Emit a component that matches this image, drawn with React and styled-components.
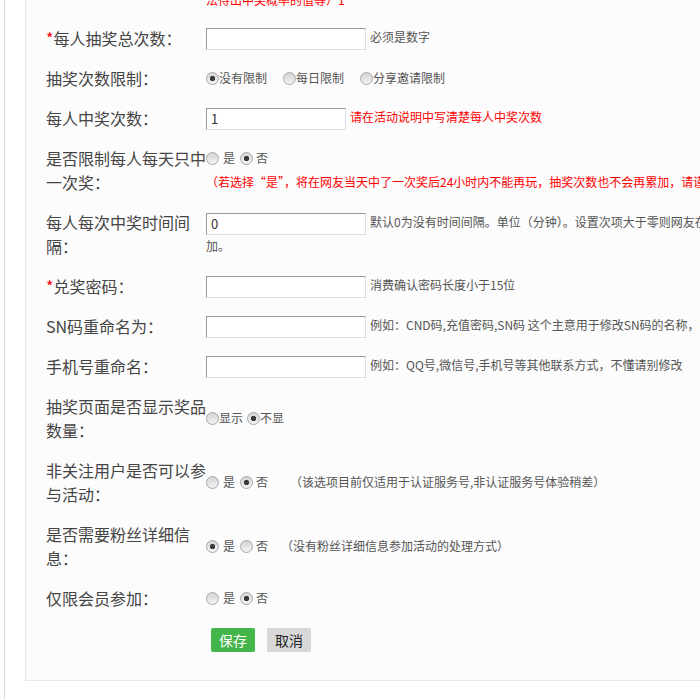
import React from 'react';
import styled, { createGlobalStyle } from 'styled-components';

const GlobalStyle = createGlobalStyle`
  html, body {
    margin: 0;
    overflow: hidden;
    background: #fff;
  }
  body {
    font-family: "Noto Sans CJK SC", "Noto Sans", sans-serif;
    color: #444;
  }
`;

const Page = styled.div`
  margin-left: 4px;
  border-left: 1px solid #d3dbe7;
  min-height: 100vh;
  box-sizing: border-box;
  padding: 0 0 18px 20px;
`;

const Panel = styled.div`
  width: 1000px;
  margin-top: -11px;
  padding: 0 0 28px 20px;
  background: #fcfcfc;
  border: 1px solid #e8e8e8;
`;

const Form = styled.form`
  display: grid;
  grid-template-columns: 160px 600px;
  row-gap: 16px;
  align-items: center;
`;

const Label = styled.div`
  font-size: 16px;
  line-height: 24px;
  color: #444;
`;

const Star = styled.span`
  color: #f00;
`;

const Field = styled.div`
  font-size: 12px;
  line-height: 22px;
  color: #555;
`;

const TopNote = styled.div`
  grid-column: 2;
  font-size: 12px;
  line-height: 20px;
  color: #f00;
  white-space: nowrap;
`;

const TextInput = styled.input`
  box-sizing: border-box;
  width: ${(p) => p.$width || 160}px;
  height: 22px;
  margin: 0;
  padding: 0 4px;
  border: 1px solid;
  border-color: #999 #ddd #ddd #999;
  background: #fff;
  font-family: inherit;
  font-size: 13px;
  color: #333;
  vertical-align: middle;
  outline: none;
`;

const Hint = styled.span`
  margin-left: ${(p) => (p.$gap != null ? p.$gap : 4)}px;
  color: ${(p) => (p.$red ? '#f00' : '#555')};
  white-space: ${(p) => (p.$wrap ? 'normal' : 'nowrap')};
`;

const BlockHint = styled.div`
  color: #f00;
  white-space: nowrap;
  line-height: 24px;
`;

const RadioLine = styled.div`
  display: flex;
  align-items: center;
  height: 24px;
  white-space: nowrap;
`;

const Option = styled.label`
  display: inline-flex;
  align-items: center;
  gap: ${(p) => p.$gap || 0}px;
  margin-right: ${(p) => p.$after || 0}px;
`;

const Radio = styled.input.attrs({ type: 'radio' })`
  appearance: none;
  box-sizing: border-box;
  width: 13px;
  height: 13px;
  margin: 0;
  border: 1px solid #a8a8a8;
  border-radius: 50%;
  background: linear-gradient(#d4d4d4, #f4f4f4);

  &:checked {
    background:
      radial-gradient(circle, #3c3c3c 0 2.4px, transparent 3px),
      linear-gradient(#d4d4d4, #f4f4f4);
  }
`;

const ButtonBar = styled.div`
  grid-column: 2;
  display: flex;
  gap: 12px;
  padding-left: 5px;
  margin-top: 2px;
`;

const Button = styled.button`
  height: 24px;
  padding: 0 8px;
  border: none;
  border-radius: 2px;
  font-family: inherit;
  font-size: 14px;
  line-height: 24px;
  cursor: pointer;
  background: ${(p) => (p.$primary ? '#44b549' : '#d8d8d8')};
  color: ${(p) => (p.$primary ? '#fff' : '#222')};
`;

const YesNo = ({ name, yes, hint, hintGap }) => (
  <RadioLine>
    <Option $gap={4} $after={5}>
      <Radio name={name} defaultChecked={yes} />是
    </Option>
    <Option $gap={3}>
      <Radio name={name} defaultChecked={!yes} />否
    </Option>
    {hint && <Hint $gap={hintGap}>{hint}</Hint>}
  </RadioLine>
);

export default function App() {
  return (
    <>
      <GlobalStyle />
      <Page>
        <Panel>
          <Form onSubmit={(e) => e.preventDefault()}>
            <TopNote>法得出中奖概率的值等）1</TopNote>

            <Label><Star>*</Star>每人抽奖总次数：</Label>
            <Field>
              <TextInput />
              <Hint>必须是数字</Hint>
            </Field>

            <Label>抽奖次数限制：</Label>
            <Field>
              <RadioLine>
                <Option $after={16}><Radio name="limit" defaultChecked />没有限制</Option>
                <Option $after={16}><Radio name="limit" />每日限制</Option>
                <Option><Radio name="limit" />分享邀请限制</Option>
              </RadioLine>
            </Field>

            <Label>每人中奖次数：</Label>
            <Field>
              <TextInput $width={140} defaultValue="1" />
              <Hint $red>请在活动说明中写清楚每人中奖次数</Hint>
            </Field>

            <Label>是否限制每人每天只中一次奖：</Label>
            <Field>
              <YesNo name="daily" yes={false} />
              <BlockHint>（若选择“是”，将在网友当天中了一次奖后24小时内不能再玩，抽奖次数也不会再累加，请谨慎选择）</BlockHint>
            </Field>

            <Label>每人每次中奖时间间隔：</Label>
            <Field>
              <TextInput defaultValue="0" />
              <Hint $wrap>默认0为没有时间间隔。单位（分钟）。设置次项大于零则网友在该时间内不会累加。</Hint>
            </Field>

            <Label><Star>*</Star>兑奖密码：</Label>
            <Field>
              <TextInput />
              <Hint>消费确认密码长度小于15位</Hint>
            </Field>

            <Label>SN码重命名为：</Label>
            <Field>
              <TextInput />
              <Hint>例如：CND码,充值密码,SN码 这个主意用于修改SN码的名称，不懂请别修改</Hint>
            </Field>

            <Label>手机号重命名：</Label>
            <Field>
              <TextInput />
              <Hint>例如：QQ号,微信号,手机号等其他联系方式，不懂请别修改</Hint>
            </Field>

            <Label>抽奖页面是否显示奖品数量：</Label>
            <Field>
              <RadioLine>
                <Option $after={4}><Radio name="show" />显示</Option>
                <Option><Radio name="show" defaultChecked />不显</Option>
              </RadioLine>
            </Field>

            <Label>非关注用户是否可以参与活动：</Label>
            <Field>
              <YesNo
                name="follow"
                yes={false}
                hint="（该选项目前仅适用于认证服务号,非认证服务号体验稍差）"
                hintGap={22}
              />
            </Field>

            <Label>是否需要粉丝详细信息：</Label>
            <Field>
              <YesNo
                name="fans"
                yes
                hint="（没有粉丝详细信息参加活动的处理方式）"
                hintGap={13}
              />
            </Field>

            <Label>仅限会员参加：</Label>
            <Field>
              <YesNo name="member" yes={false} />
            </Field>

            <ButtonBar>
              <Button type="submit" $primary>保存</Button>
              <Button type="button">取消</Button>
            </ButtonBar>
          </Form>
        </Panel>
      </Page>
    </>
  );
}
